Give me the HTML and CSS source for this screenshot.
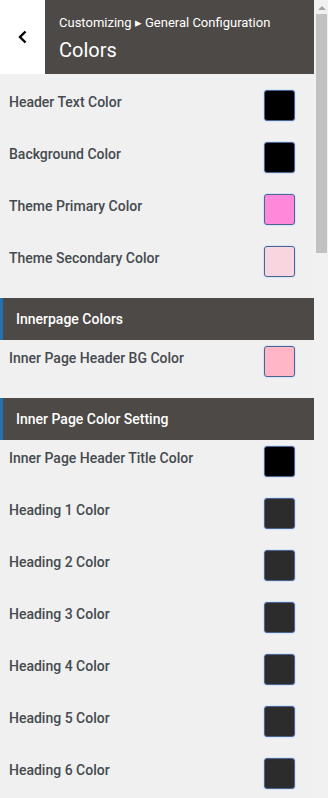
FILE: index.html
```html
<!DOCTYPE html>
<html lang="en">
<head>
    <meta charset="UTF-8">
    <meta content="width=device-width, initial-scale=1.0" name="viewport">
    <title>Colors</title>
    <link rel="stylesheet" href="styles.css">
</head>
<body>
<div id="wrap">
    <div id="panel">
        <div id="header">
            <a class="back" href="javascript:">
                <svg width="12" height="14" viewBox="0 0 12 14"><path d="M8.5 1.5 L3 7 L8.5 12.5" fill="none" stroke="#000" stroke-width="2.4"/></svg>
            </a>
            <div class="title">
                <div class="crumb">Customizing &#9656; General Configuration</div>
                <div class="name">Colors</div>
            </div>
        </div>
        <div id="controls">
            <div class="row"><span class="label">Header Text Color</span><span class="swatch" style="background:#000"></span></div>
            <div class="row"><span class="label">Background Color</span><span class="swatch" style="background:#000"></span></div>
            <div class="row"><span class="label">Theme Primary Color</span><span class="swatch" style="background:#ff88db"></span></div>
            <div class="row"><span class="label">Theme Secondary Color</span><span class="swatch" style="background:#f7d6df"></span></div>

            <div class="section">Innerpage Colors</div>
            <div class="row"><span class="label">Inner Page Header BG Color</span><span class="swatch" style="background:#ffb7c8"></span></div>

            <div class="section">Inner Page Color Setting</div>
            <div class="row"><span class="label">Inner Page Header Title Color</span><span class="swatch" style="background:#000"></span></div>
            <div class="row"><span class="label">Heading 1 Color</span><span class="swatch" style="background:#2c2c2c"></span></div>
            <div class="row"><span class="label">Heading 2 Color</span><span class="swatch" style="background:#2c2c2c"></span></div>
            <div class="row"><span class="label">Heading 3 Color</span><span class="swatch" style="background:#2c2c2c"></span></div>
            <div class="row"><span class="label">Heading 4 Color</span><span class="swatch" style="background:#2c2c2c"></span></div>
            <div class="row"><span class="label">Heading 5 Color</span><span class="swatch" style="background:#2c2c2c"></span></div>
            <div class="row"><span class="label">Heading 6 Color</span><span class="swatch" style="background:#2c2c2c"></span></div>
        </div>
    </div>
    <div id="scrollbar">
        <div class="up"></div>
        <div class="thumb"></div>
    </div>
</div>
</body>
</html>
```

FILE: styles.css
```css
html, body {
    margin: 0;
    height: 100%;
}

body {
    background: #f0f0f0;
    font-family: Roboto, "Liberation Sans", sans-serif;
    overflow: hidden;
}

#wrap {
    display: flex;
    height: 798px;
}

#panel {
    width: 314px;
    flex: none;
}

#header {
    display: flex;
    height: 74px;
}

.back {
    display: flex;
    align-items: center;
    justify-content: center;
    width: 45px;
    background: #fff;
    text-decoration: none;
}

.title {
    flex: 1;
    padding: 14px 0 0 14px;
    background: #4d4946;
    color: #fff;
}

.crumb {
    font-size: 13px;
    line-height: 18px;
}

.name {
    margin-top: 5px;
    font-size: 20px;
    line-height: 26px;
}

#controls {
    padding-top: 16px;
}

.row {
    display: flex;
    justify-content: space-between;
    height: 30px;
    margin-bottom: 22px;
    padding: 0 19px 0 9px;
}

.label {
    padding-top: 1px;
    font-size: 14px;
    font-weight: 500;
    line-height: 22px;
    color: #454a4f;
}

.swatch {
    width: 29px;
    height: 29px;
    border: 1px solid #4a6593;
    border-radius: 3px;
    box-shadow: 0 0 0 1px rgba(170, 210, 250, 0.35);
}

.section {
    height: 42px;
    margin-bottom: 6px;
    padding-left: 13px;
    border-left: 3px solid #2271b1;
    background: #4d4946;
    color: #fff;
    font-size: 14px;
    font-weight: 500;
    line-height: 42px;
}

#scrollbar {
    width: 14px;
    flex: none;
    background: #f1f1f1;
    padding: 0 1px 0 2px;
    box-sizing: border-box;
}

.up {
    width: 0;
    height: 0;
    margin: 6px auto 4px;
    border-left: 4px solid transparent;
    border-right: 4px solid transparent;
    border-bottom: 4px solid #a3a3a3;
}

.thumb {
    height: 239px;
    background: #c1c1c1;
}
```
